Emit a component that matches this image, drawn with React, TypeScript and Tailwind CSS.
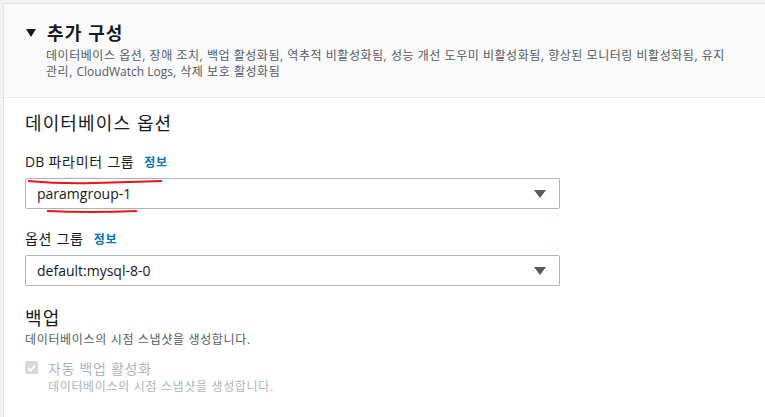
import React from 'react';

const font = { fontFamily: '"Open Sans", "Noto Sans CJK KR", sans-serif' };

function Caret() {
  return (
    <svg width="12" height="8" viewBox="0 0 12 8" className="shrink-0">
      <path d="M0 0 L12 0 L6 8 Z" fill="#545b64" />
    </svg>
  );
}

function Select({ value }: { value: string }) {
  return (
    <div className="mt-[5px] flex h-[31px] w-[535px] items-center justify-between rounded-[2px] border border-[#aab7b8] bg-white pl-[11px] pr-[13px]">
      <span className="text-[14px] tracking-normal text-[#16191f]">{value}</span>
      <Caret />
    </div>
  );
}

function Label({ text }: { text: React.ReactNode }) {
  return (
    <div className="flex items-baseline gap-[10px] text-[14px] leading-[20px] tracking-[0.05em] text-[#16191f]">
      <span>{text}</span>
      <span className="text-[12px] font-bold text-[#0073bb]">정보</span>
    </div>
  );
}

export default function App() {
  return (
    <div
      className="relative h-[417px] w-[765px] overflow-hidden bg-[#f2f3f3] pl-[3px] pt-[3px] tracking-[0.07em]"
      style={font}
    >
      <div className="h-full border-l border-t border-[#e1e4e4] bg-white">
        <div className="h-[94px] border-b border-[#e6e9e9] bg-[#fafafa] pl-[22px] pt-[16px]">
          <div className="flex items-center gap-[11px]">
            <svg width="10" height="8" viewBox="0 0 10 8">
              <path d="M0 0 L10 0 L5 8 Z" fill="#16191f" />
            </svg>
            <span className="text-[18px] font-bold leading-[26px] text-[#16191f]">추가 구성</span>
          </div>
          <p className="mt-[2px] whitespace-nowrap pl-[20px] text-[12px] leading-[16px] tracking-[0.045em] text-[#545b64]">
            데이터베이스 옵션, 장애 조치, 백업 활성화됨, 역추적 비활성화됨, 성능 개선 도우미 비활성화됨, 향상된 모니터링 비활성화됨, 유지
            <br />
            관리, <span className="tracking-normal">CloudWatch Logs</span>, 삭제 보호 활성화됨
          </p>
        </div>
        <div className="pl-[21px] pt-[12px]">
          <h2 className="text-[18px] leading-[26px] text-[#16191f]">데이터베이스 옵션</h2>
          <div className="mt-[16px]">
            <Label
              text={
                <>
                  <span className="tracking-normal">DB</span> 파라미터 그룹
                </>
              }
            />
            <Select value="paramgroup-1" />
          </div>
          <div className="mt-[20px]">
            <Label text="옵션 그룹" />
            <Select value="default:mysql-8-0" />
          </div>
          <h2 className="mt-[19px] text-[18px] leading-[26px] text-[#16191f]">백업</h2>
          <p className="mt-[1px] text-[12px] leading-[16px] tracking-[0.055em] text-[#545b64]">
            데이터베이스의 시점 스냅샷을 생성합니다.
          </p>
          <div className="mt-[10px] flex gap-[10px]">
            <div className="mt-[3px] flex h-[13px] w-[13px] items-center justify-center rounded-[2px] bg-[#d5dbdb]">
              <svg width="9" height="8" viewBox="0 0 10 8">
                <path d="M1 4 L4 7 L9 1" stroke="#ffffff" strokeWidth="2" fill="none" />
              </svg>
            </div>
            <div>
              <div className="text-[14px] leading-[21px] tracking-[0.05em] text-[#aab7b8]">자동 백업 활성화</div>
              <div className="text-[12px] leading-[16px] tracking-[0.055em] text-[#aab7b8]">
                데이터베이스의 시점 스냅샷을 생성합니다.
              </div>
            </div>
          </div>
        </div>
      </div>
      <svg className="pointer-events-none absolute left-0 top-0" width="765" height="417">
        <path d="M28 181 Q60 184 95 183 T162 181" stroke="#e8141b" strokeWidth="2" fill="none" />
        <path d="M47 211 Q90 213 137 211" stroke="#e8141b" strokeWidth="2" fill="none" />
      </svg>
    </div>
  );
}
